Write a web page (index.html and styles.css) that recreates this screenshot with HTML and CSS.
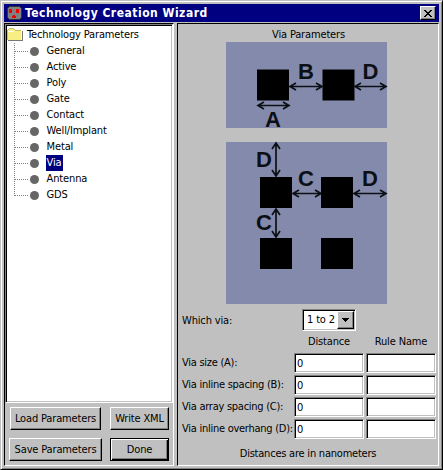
FILE: index.html
```html
<!DOCTYPE html>
<html lang="en"><head><meta charset="utf-8"><title>Technology Creation Wizard</title>
<link rel="stylesheet" href="styles.css"></head>
<body>
<div class="window">
 <header class="titlebar">
  <svg class="logo" width="15" height="15" viewBox="0 0 15 15" shape-rendering="crispEdges"><path d="M2 0h11v1h1v1h1v10h-1v1h-1v1H2v-1H1v-1H0V2h1V1h1z" fill="#333"/><path d="M2 1h11v1h1v10h-1v1H2v-1H1V2h1z" fill="#808080"/><path d="M2 3h3v4H2zM9 3h3v4H9zM6 9h2v1h1v2H5v-2h1z" fill="#f00000"/></svg>
  <h1>Technology Creation Wizard</h1>
  <button class="close" aria-label="Close"><svg width="8" height="7" viewBox="0 0 8 7" shape-rendering="crispEdges"><path d="M0 0h2v1h1v1h2V1h1V0h2v1H7v1H6v1H5v1h1v1h1v1h1v1H6V6H5V5H3v1H2v1H0V6h1V5h1V4h1V3H2V2H1V1H0z"/></svg></button>
 </header>
 <main class="content">
  <section class="left">
   <div class="tree">
    <div class="root"><svg width="16" height="14" viewBox="0 0 16 14" shape-rendering="crispEdges"><path d="M1 2l1-1h5l1 2h6v9H1z" fill="#f7ef84"/><path d="M0 2h1v10H0zM1 1h1v1H1zM2 0h5v1H2zM7 1h1v1H7zM8 2h6v1H8z" fill="#c6bd6b"/><path d="M1 12h14V3h1v10H1z" fill="#777"/><path d="M1 3h6v1H1z" fill="#fff"/></svg><span>Technology Parameters</span></div>
    <ul>
     <li><i></i><span>General</span></li><li><i></i><span>Active</span></li><li><i></i><span>Poly</span></li><li><i></i><span>Gate</span></li><li><i></i><span>Contact</span></li><li><i></i><span>Well/Implant</span></li><li><i></i><span>Metal</span></li><li><i></i><span class="selected">Via</span></li><li><i></i><span>Antenna</span></li><li><i></i><span>GDS</span></li>
    </ul>
   </div>
   <div class="buttons"><button class="load">Load Parameters</button><button class="write">Write XML</button><button class="save">Save Parameters</button><button class="done">Done</button></div>
  </section>
  <section class="right">
   <h2>Via Parameters</h2>
   <svg class="diagram one" width="161" height="86" viewBox="226 42 161 86">
    <path fill="#848aab" d="M226 42h161v86H226z"/><path d="M257 69.500h32v31h-32zM322.500 69.500h32v31h-32z"/>
    <g class="arrow"><path d="M290 86.500h32M296 83l-6 3.500 6 3.500M316 83l6 3.500-6 3.500M355 86.500h31M361 83l-6 3.500 6 3.500M380 83l6 3.500-6 3.500M258 105.500h31M264 102l-6 3.500 6 3.500M283 102l6 3.500-6 3.500"/></g>
    <text x="298" y="79">B</text><text x="362.500" y="79">D</text><text x="265" y="126.500">A</text>
   </svg>
   <svg class="diagram two" width="161" height="162" viewBox="226 142 161 162">
    <path fill="#848aab" d="M226 142h161v162H226z"/><path d="M260 177h32v31h-32zM321 177h32v31h-32zM260 238h32v31h-32zM321 238h32v31h-32z"/>
    <g class="arrow"><path d="M276 143v33M272 149l4-6 4 6M272 170l4 6 4-6M276 209v28M272 215l4-6 4 6M272 231l4 6 4-6M293 193.500h28M299 190l-6 3.500 6 3.500M315 190l6 3.500-6 3.500M354 193.500h32M360 190l-6 3.500 6 3.500M380 190l6 3.500-6 3.500"/></g>
    <text x="256" y="166.500">D</text><text x="298" y="186">C</text><text x="362" y="186">D</text><text x="256" y="229.500">C</text>
   </svg>
   <div class="which"><span>Which via:</span><div class="combo"><span>1 to 2</span><button aria-label="Choose via"><svg width="7" height="4" viewBox="0 0 7 4" shape-rendering="crispEdges"><path d="M0 0h7v1H6v1H5v1H4v1H3V3H2V2H1V1H0z"/></svg></button></div></div>
   <div class="heads"><span>Distance</span><span>Rule Name</span></div>
   <div class="fields">
    <label>Via size (A):</label><input value="0"><input>
    <label>Via inline spacing (B):</label><input value="0"><input>
    <label>Via array spacing (C):</label><input value="0"><input>
    <label>Via inline overhang (D):</label><input value="0"><input>
   </div>
   <p>Distances are in nanometers</p>
  </section>
 </main>
</div>
</body></html>
```
FILE: styles.css
```css
*{box-sizing:border-box}
body{margin:0;background:#c0c0c0;color:#000;font:11px/16px "DejaVu Sans Condensed","DejaVu Sans",sans-serif;letter-spacing:-.15px;white-space:nowrap}
h1,h2,p,ul{margin:0;padding:0;font:inherit}
button,input{font:inherit;letter-spacing:inherit;color:#000;border-radius:0;margin:0;padding:0}
.window{width:443px;height:470px;padding:3px 3px 2px 3px;border:1px solid;border-color:#c0c0c0 #000 #000 #c0c0c0;box-shadow:inset 1px 1px #fff,inset -1px -1px #808080}
.titlebar{height:18px;background:#000080;display:flex;align-items:center;padding:0 3px;color:#fff}
h1{font-size:12px;font-weight:bold;letter-spacing:.5px;margin-left:3px;flex:1}
.close{width:16px;height:14px;background:#c0c0c0;border:1px solid;border-color:#fff #000 #000 #fff;box-shadow:inset -1px -1px #808080;display:flex;align-items:center;justify-content:center}
.content{display:flex;margin-top:1px;height:443px}
.left{width:170px;flex:none;border:1px solid;border-color:#000 #fff #fff #000}
.tree{height:379px;background:#fff;border:1px solid;border-color:#808080 #fff #fff #808080;box-shadow:inset 1px 1px #000,inset -1px -1px #c0c0c0;padding:2px 0 0 1px}
.root{display:flex;height:16px;align-items:center}
.root span{margin-left:4px}
ul{list-style:none;margin-left:7px;position:relative}
ul:before{content:"";position:absolute;left:0;top:0;height:153px;border-left:1px dotted #808080}
li{height:16px;display:flex;align-items:center}
li:before{content:"";width:14px;border-top:1px dotted #808080}
i{width:9px;height:9px;border-radius:50%;background:#666;margin:0 7px 0 2px}
li span{padding:0 2px 0 .6px}
.selected{background:#000080;color:#fff}
.buttons{display:grid;grid-template-columns:93px 59px;column-gap:8px;row-gap:8px;padding:4px 0 0 4px}
.buttons button,.combo button{background:#c0c0c0;border:1px solid;border-color:#fff #000 #000 #fff;box-shadow:inset -1px -1px #808080}
.buttons button{height:23px}
.load{width:91px;justify-self:center}
.buttons .done{border-color:#000;box-shadow:inset 1px 1px #fff,inset -1px -1px #000,inset -2px -2px #808080}
.right{margin-left:3px;width:262px;flex:none;border:1px solid;border-color:#000 #fff #fff #000;display:flex;flex-direction:column;padding-top:3px}
h2{margin-left:94px;height:15px}
.diagram{display:block;margin-left:48px;flex:none;overflow:visible}
.two{margin-top:14px}
.arrow{fill:none;stroke:#0c1015;stroke-width:1.7}
.diagram text{font:bold 22px "Liberation Sans",sans-serif;letter-spacing:0;fill:#0c1015}
.which{height:22px;margin:5px 0 0 4px;display:flex;align-items:center}
.which>span{width:120px;padding-top:2px}
.combo{width:54px;height:22px;background:#fff;border:1px solid;border-color:#808080 #fff #fff #808080;box-shadow:inset 1px 1px #000,inset -1px -1px #c0c0c0;display:flex;align-items:center;padding:1px}
.combo span{width:33px;padding-left:3px}
.combo button{width:17px;height:18px;display:flex;align-items:center;justify-content:center}
.heads{display:flex;height:22px;align-items:center;margin-left:115px}
.heads span{width:72px;text-align:center}
.fields{display:grid;grid-template-columns:110px 70px 70px;column-gap:2px;row-gap:2px;padding-left:4px}
input{width:70px;height:20px;border:1px solid;border-color:#808080 #fff #fff #808080;box-shadow:inset 1px 1px #000,inset -1px -1px #c0c0c0;padding-left:2px}
label{align-self:center;letter-spacing:-.26px}
p{text-align:center;margin-top:7px;letter-spacing:-.22px}
```
